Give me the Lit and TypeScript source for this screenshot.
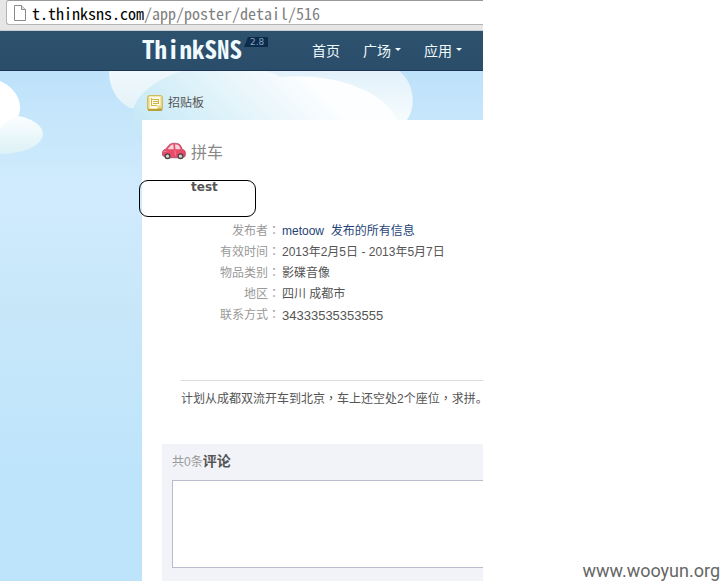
import { LitElement, html, css } from "lit";
import { customElement } from "lit/decorators.js";

const fields = [
  { label: "有效时间", value: "2013年2月5日 - 2013年5月7日" },
  { label: "物品类别", value: "影碟音像" },
  { label: "地区", value: "四川 成都市" },
];

@customElement("address-bar")
class AddressBar extends LitElement {
  static styles = css`
    :host {
      display: block;
      height: 31px;
      box-sizing: border-box;
      padding-left: 6px;
      background: #e6e6e6;
      border-bottom: 1px solid #c9cdd1;
    }
    .box {
      display: flex;
      align-items: center;
      gap: 6px;
      height: 25px;
      box-sizing: border-box;
      padding-left: 7px;
      background: #fff;
      border: 1px solid #b4b4b4;
      border-top-color: #999;
      border-right: 0;
      border-radius: 3px 0 0 3px;
    }
    .url {
      font: 16px/22px "Noto Sans CJK SC", monospace;
      font-feature-settings: "hwid";
      color: #808080;
      white-space: nowrap;
    }
    .host {
      color: #000;
    }
  `;
  render() {
    return html`<div class="box">
      <svg width="12" height="16" viewBox="0 0 12 16" fill="#fff" stroke="#8a8a8a">
        <path d="M.5 .5h7l4 4v11h-11z" />
        <path d="M7.500 .5v4h4" fill="#e4e4e4" />
      </svg>
      <span class="url"><span class="host">t.thinksns.com</span>/app/poster/detail/516</span>
    </div>`;
  }
}

@customElement("site-header")
class SiteHeader extends LitElement {
  static styles = css`
    :host {
      display: flex;
      height: 40px;
      box-sizing: border-box;
      padding-left: 142px;
      background: linear-gradient(#2d526e, #2a4d6a);
      border-bottom: 1px solid #1c3554;
      overflow: hidden;
      white-space: nowrap;
    }
    .logo {
      display: flex;
      align-items: flex-start;
      width: 170px;
      flex: none;
      text-decoration: none;
      color: #f0fbff;
    }
    .name {
      font: bold 25px/34px "Noto Sans CJK SC", sans-serif;
      font-feature-settings: "hwid";
    }
    .version {
      margin: 6px 0 0 2px;
      padding: 0 4px 0 6px;
      background: #0f2b4c;
      clip-path: polygon(16% 0, 100% 0, 100% 100%, 0 100%);
      color: #7fa3c4;
      font: 9px/10px "DejaVu Sans", sans-serif;
    }
    nav {
      display: flex;
      gap: 23px;
      align-items: center;
      padding-bottom: 2px;
      font: 14px/20px "Noto Sans CJK SC", sans-serif;
    }
    nav a {
      display: flex;
      align-items: center;
      gap: 4px;
      color: #effaff;
      text-decoration: none;
    }
    .caret {
      border: 3px solid transparent;
      border-top-color: #effaff;
      border-bottom: 0;
    }
  `;
  render() {
    return html`
      <a class="logo" href="#"><span class="name">ThinkSNS</span><span class="version">2.8</span></a>
      <nav>
        <a href="#">首页</a>
        <a href="#">广场<span class="caret"></span></a>
        <a href="#">应用<span class="caret"></span></a>
      </nav>
    `;
  }
}

@customElement("sky-clouds")
class SkyClouds extends LitElement {
  static styles = css`
    :host {
      display: block;
      position: absolute;
      top: 0;
      left: 0;
    }
    svg {
      display: block;
    }
  `;
  render() {
    return html`<svg width="483" height="100" viewBox="0 71 483 100" aria-hidden="true">
      <defs>
        <linearGradient id="low" x1="0" y1="0" x2="0" y2="1">
          <stop offset="0" stop-color="#fdffff" />
          <stop offset="1" stop-color="#dcf1f7" />
        </linearGradient>
        <linearGradient id="puff" gradientUnits="userSpaceOnUse" x1="0" y1="71" x2="0" y2="120">
          <stop offset="0" stop-color="#f0f8fc" />
          <stop offset="1" stop-color="#dff1f7" />
        </linearGradient>
        <linearGradient id="right" gradientUnits="userSpaceOnUse" x1="0" y1="71" x2="0" y2="120">
          <stop offset="0" stop-color="#e2f1fb" />
          <stop offset="1" stop-color="#f6fcfd" />
        </linearGradient>
        <linearGradient id="main" gradientUnits="userSpaceOnUse" x1="140" y1="190" x2="280" y2="50">
          <stop offset="0" stop-color="#b8e2f7" />
          <stop offset=".5" stop-color="#d9f0f8" />
          <stop offset="1" stop-color="#fdfeff" />
        </linearGradient>
      </defs>
      <ellipse cx="0" cy="134" rx="43" ry="20" fill="url(#low)" />
      <path d="M0 81C16 88 23 102 19 115Q10 118 0 128z" fill="#fff" />
      <path d="M109 71C109 87 116 101 130 108L200 108L290 71z" fill="url(#puff)" />
      <path d="M240 71H399C412 80 418 104 407 120H240z" fill="url(#right)" />
      <path d="M142 143C122 116 132 88 182 71H265Q274 73 280 77C335 72 386 92 397 120H142z" fill="url(#main)" />
    </svg>`;
  }
}

@customElement("app-root")
class AppRoot extends LitElement {
  static styles = css`
    :host {
      display: grid;
      grid-template-columns: minmax(0, 483fr) minmax(0, 237fr);
      min-height: 100vh;
      background: #fff;
      color: #555;
      font: 12px/21px "Liberation Sans", "Noto Sans CJK SC", sans-serif;
    }
    .shot {
      display: flex;
      flex-direction: column;
      overflow: hidden;
    }
    .sky {
      position: relative;
      flex: 1;
      display: flex;
      flex-direction: column;
      padding-left: 142px;
      background: linear-gradient(#bee2fb, #c8e7fb 60px, #d0ebfd 120px, #c6e7f9 260px, #bee4fb 400px);
    }
    .crumb {
      position: relative;
      display: flex;
      align-items: center;
      gap: 5px;
      height: 49px;
      box-sizing: border-box;
      padding: 15px 0 0 5px;
    }
    .panel {
      position: relative;
      flex: 1;
      display: flex;
      flex-direction: column;
      padding-left: 20px;
      background: #fff;
    }
    h1 {
      display: flex;
      align-items: center;
      gap: 5px;
      margin: 19px 0 0;
      font: 16px/24px "Noto Sans CJK SC", sans-serif;
      color: #888;
    }
    .subject {
      height: 45px;
      margin: 13px 0 0 29px;
      font: bold 12px/22px "DejaVu Sans", sans-serif;
    }
    .mark {
      position: absolute;
      top: 60px;
      left: -3px;
      width: 117px;
      height: 37px;
      box-sizing: border-box;
      border: 1px solid #000;
      border-radius: 9px;
    }
    dl {
      display: grid;
      grid-template-columns: 118px auto;
      grid-auto-rows: 21px;
      column-gap: 2px;
      margin: 0;
      white-space: nowrap;
    }
    dt {
      text-align: right;
      color: #999;
    }
    dd {
      margin: 0;
    }
    dd a {
      color: #1f4478;
      text-decoration: none;
    }
    .phone {
      font-size: 13px;
    }
    .mid {
      font-family: "Noto Sans CJK TC", sans-serif;
      line-height: 1;
    }
    .stop {
      font-family: "Noto Sans CJK SC", sans-serif;
      font-feature-settings: "halt";
      line-height: 1;
    }
    .text {
      margin: 54px 0 0 19px;
      padding-top: 8px;
      border-top: 1px solid #ddd;
      white-space: nowrap;
    }
    .comments {
      flex: 1;
      margin-top: 34px;
      padding: 7px 0 13px 10px;
      background: #f2f3f8;
    }
    .comments label {
      display: block;
      line-height: 22px;
      color: #999;
    }
    .comments b {
      font-size: 14px;
      line-height: 1;
      color: #555;
    }
    textarea {
      display: block;
      width: 100%;
      height: 88px;
      box-sizing: border-box;
      margin: 7px 0 0;
      border: 1px solid #b9bccf;
      border-right: 0;
      border-radius: 0;
      background: #fff;
      resize: none;
      outline: 0;
    }
    .credit {
      align-self: end;
      text-align: right;
      font: 18px/20px Roboto, sans-serif;
      color: #666;
    }
  `;

  render() {
    const colon = html`<span class="mid">：</span>`;
    const comma = html`<span class="mid">，</span>`;
    return html`
      <div class="shot">
        <address-bar></address-bar>
        <site-header></site-header>
        <div class="sky">
          <sky-clouds></sky-clouds>
          <div class="crumb">
            <svg width="16" height="17" viewBox="0 0 16 17">
              <rect x=".5" y=".5" width="15" height="15" rx="2" fill="#e6d68a" stroke="#cdbb62" />
              <path d="M1 13.500h14v1.500q0 1-1 1H2q-1 0-1-1z" fill="#b5a03c" />
              <path d="M2.500 1.500h11v9l-3 3h-8z" fill="#fffdf0" stroke="#f3e6a8" />
              <path d="M10.500 13.500v-3h3z" fill="#e8d070" />
              <path d="M4.500 3v8M4 4.500h7.500M6 6.500h5M6 8.500h5M4 10.500h6M11.500 4v5" stroke="#d3b440" fill="none" />
            </svg>
            <span>招贴板</span>
          </div>
          <main class="panel">
            <h1>
              <svg width="24" height="18" viewBox="0 0 24 18">
                <path d="M3 16.500h18" stroke="#ddd" />
                <path d="M.6 13.500C-.2 9.500 1 8 3.500 7.300L7 3.200C8.500 1.600 10 1.200 12.500 1.200C16 1.200 17.800 2 18.800 4L20.300 7.200C22.800 8 23.600 9.500 23.500 12L23 14.500L20.500 15.500H4z" fill="#e84c68" stroke="#a8405a" stroke-width=".7" />
                <path d="M5.500 7.300L8.500 3.700C9.300 2.800 10 2.600 11.300 2.500L11.800 7.300zM13 2.500C15.500 2.500 16.800 3 17.500 4.500L18.600 7.300H13.500z" fill="#f6d3da" />
                <path d="M1.500 9.500h3M13 8.500l.5 5" stroke="#f58ba0" stroke-width=".8" />
                <circle cx="5.500" cy="14.200" r="3" fill="#4a4245" /><circle cx="5.500" cy="14.200" r="1.600" fill="#d8d8d8" />
                <circle cx="18.500" cy="14.200" r="3" fill="#4a4245" /><circle cx="18.500" cy="14.200" r="1.600" fill="#d8d8d8" />
              </svg>
              <span>拼车</span>
            </h1>
            <div class="subject">test</div>
            <div class="mark"></div>
            <dl>
              <dt>发布者${colon}</dt>
              <dd><a href="#">metoow&nbsp; 发布的所有信息</a></dd>
              ${fields.map((f) => html`<dt>${f.label}${colon}</dt><dd>${f.value}</dd>`)}
              <dt>联系方式${colon}</dt>
              <dd class="phone">34333535353555</dd>
            </dl>
            <div class="text">计划从成都双流开车到北京${comma}车上还空处2个座位${comma}求拼<span class="stop">。</span></div>
            <section class="comments">
              <label for="comment">共0条<b>评论</b></label>
              <textarea id="comment"></textarea>
            </section>
          </main>
        </div>
      </div>
      <div class="credit">www.wooyun.org</div>
    `;
  }
}
